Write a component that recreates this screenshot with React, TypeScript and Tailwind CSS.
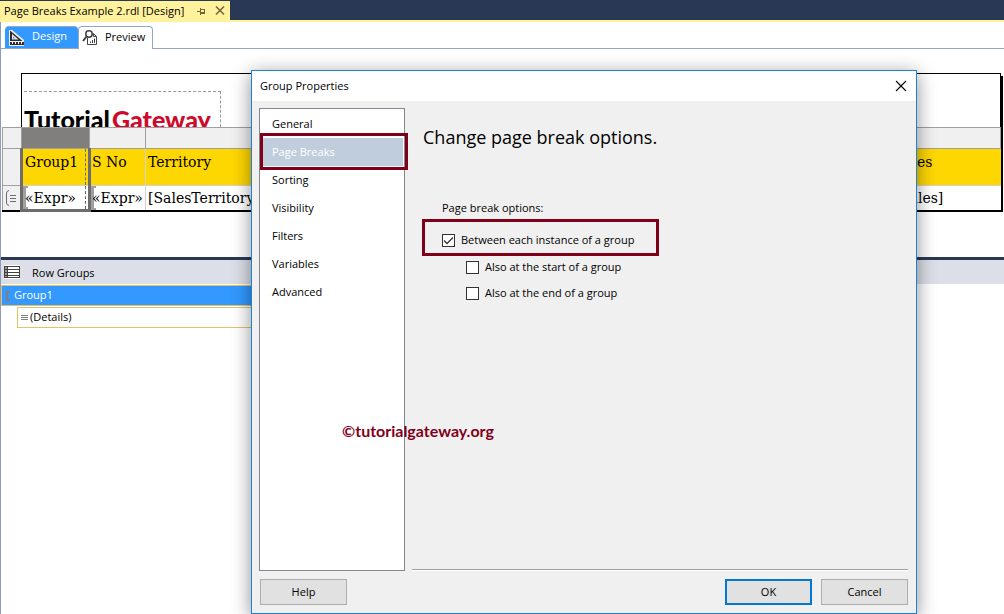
import React, { useState } from 'react';

const pages = ['General', 'Page Breaks', 'Sorting', 'Visibility', 'Filters', 'Variables', 'Advanced'];

const DesignIcon: React.FC = () => (
  <svg width="16" height="16" viewBox="0 0 16 16" aria-hidden="true">
    <path d="M1 0H3L15 10V16H0V0Z" fill="#f0eff1" />
    <path d="M1 0.500L13.500 11H1Z" fill="#2d2d30" />
    <path d="M3 4L9.500 9.500H3Z" fill="#f0eff1" />
    <path d="M4 6.500L6.500 8.500H4Z" fill="#3399ff" />
    <path d="M1 12h14v3H1z" fill="#2d2d30" />
    <path d="M3 12h1v2H3zM6 12h1v2H6zM9 12h1v2H9zM12 12h1v2h-1z" fill="#f0eff1" />
  </svg>
);

const PreviewIcon: React.FC = () => (
  <svg width="16" height="16" viewBox="0 0 16 16" fill="none" aria-hidden="true">
    <circle cx="7" cy="4" r="3.2" stroke="#424242" strokeWidth="1.5" />
    <path d="M4.500 6.500L1 11" stroke="#424242" strokeWidth="2" />
    <path d="M11.500 3.500L14.500 6.500V14.500H5.500V8" stroke="#424242" />
    <path d="M11.500 3.500V6.500H14.500" stroke="#424242" />
    <path d="M8.500 13V11.500M10.500 13V10M12.500 13V8.500" stroke="#424242" />
  </svg>
);

const DocumentTab: React.FC = () => (
  <header className="bg-[#293955] border-b-2 border-[#fff29d] pt-px">
    <div className="flex items-center w-[230px] h-[19px] pl-1 bg-[#fff29d] text-black whitespace-nowrap">
      <span className="w-[193px]">Page Breaks Example 2.rdl [Design]</span>
      <button type="button" aria-label="Pin tab" className="mr-[9px]">
        <svg width="9" height="8" viewBox="0 0 9 8" fill="none" stroke="#75633d" shapeRendering="crispEdges">
          <path d="M0 4.500H3M3.500 1V8M4 2.500H8M4 5.500H8M4 6.500H8M7.500 2V7" />
        </svg>
      </button>
      <button type="button" aria-label="Close tab">
        <svg width="10" height="9" viewBox="0 0 10 9" fill="none" stroke="#75633d" strokeWidth="1.5">
          <path d="M1 0.500L9 8.500M9 0.500L1 8.500" />
        </svg>
      </button>
    </div>
  </header>
);

const ViewTabs: React.FC = () => (
  <nav className="flex h-[27px] pt-1 pl-1 border-b border-[#98a7bd]">
    <button type="button" className="flex items-center gap-[7px] w-[73px] h-[22px] pl-1 bg-[#3399ff] border-t border-[#98a7bd] rounded-t-sm text-white">
      <DesignIcon />
      <span className="pb-[3px]">Design</span>
    </button>
    <button type="button" className="flex items-center gap-[7px] w-[75px] h-[23px] pl-[3px] bg-white border border-b-0 border-[#98a7bd] rounded-t-sm text-black">
      <PreviewIcon />
      <span className="pb-[3px]">Preview</span>
    </button>
  </nav>
);

const CellBracket: React.FC = () => (
  <span className="absolute left-0 inset-y-0 w-[5px] border-y-2 border-l-3 border-[#a0a0a0]" />
);

const ReportCanvas: React.FC = () => (
  <div className="h-[208px] pt-6 pl-px pr-[3px] overflow-hidden">
    {/* Page header */}
    <div className="ml-[19px] h-[54px] pt-[17px] border border-b-0 border-black shadow-[2px_3px_0_#000]">
      <div className="ml-0.5 w-[197px] h-9 pt-[11px] overflow-hidden border-t border-r border-dashed border-[#999999] whitespace-nowrap font-['Lato',sans-serif] text-[25px] leading-8 font-black text-black">
        Tutorial<span className="ml-0.5 text-[#ce0a2c]">Gateway</span>
      </div>
    </div>

    {/* Tablix */}
    <table className="w-full table-fixed border-collapse bg-white shadow-[2px_0_0_#000] font-['DejaVu_Serif',serif] text-[14px] leading-5 text-black">
      <colgroup>
        <col className="w-[19px]" />
        <col className="w-[68px]" />
        <col className="w-[56px]" />
        <col />
        <col className="w-[108px]" />
      </colgroup>
      <thead>
        <tr className="h-[21px] bg-[#f0f0f0]">
          <td className="border border-[#a0a0a0]" />
          <td className="border border-[#a0a0a0] bg-[#807f7d]" />
          <td className="border border-[#a0a0a0]" />
          <td className="border border-[#a0a0a0]" />
          <td className="border border-[#a0a0a0]" />
        </tr>
      </thead>
      <tbody>
        <tr className="h-[37px] bg-[#ffd700] text-left align-top">
          <td className="border border-[#a0a0a0] bg-[#f0f0f0]" />
          <th className="relative p-0 pt-[3px] pl-0.5 font-normal border-l-3 border-r-3 border-[#6d6d6d]">
            <span className="absolute inset-y-0 right-0.5 border-r border-dashed border-[#6d6d6d]" />
            Group1
          </th>
          <th className="p-0 pt-[3px] pl-px font-normal border-r border-[#d3d3d3]">S No</th>
          <th className="p-0 pt-[3px] pl-0.5 font-normal">Territory</th>
          <th className="p-0 pt-[3px] pl-0.5 font-normal">Sales</th>
        </tr>
        <tr className="h-[25px] border-b-2 border-black whitespace-nowrap">
          <td className="p-0 border border-[#a0a0a0] bg-[#f0f0f0]">
            <svg className="mx-auto" width="13" height="18" viewBox="0 0 13 18" fill="none" stroke="#6d6d6d" aria-hidden="true">
              <path d="M4 1.500Q1.500 2 1.500 4V14Q1.500 16 4 16.500M5 6.500H11M5 9.500H11M5 12.500H11" />
            </svg>
          </td>
          <td className="relative p-0 pl-0.5 border-3 border-t border-t-[#d3d3d3] border-[#6d6d6d]">
            <CellBracket />
            <span className="absolute inset-y-0 right-0.5 border-r border-dashed border-[#6d6d6d]" />
            <span className="relative">«Expr»</span>
          </td>
          <td className="relative p-0 pl-px border-r border-t border-[#d3d3d3]">
            <CellBracket />
            <span className="relative">«Expr»</span>
          </td>
          <td className="p-0 pl-0.5 border-t border-t-[#d3d3d3]">[SalesTerritory]</td>
          <td className="p-0 pl-0.5 border-t border-t-[#d3d3d3]">[Sales]</td>
        </tr>
      </tbody>
    </table>
  </div>
);

const GroupingPane: React.FC = () => (
  <section className="border-t-3 border-[#293955] text-black">
    <div className="flex items-center gap-3 h-6 pl-[3px] bg-[#dcdfe7]">
      <svg width="16" height="14" viewBox="0 0 16 14" fill="none" stroke="#424242" shapeRendering="crispEdges" aria-hidden="true">
        <path d="M0 0h16v14H0z" fill="#fff" stroke="none" />
        <path d="M0 1h3v12H0z" fill="#999" stroke="none" />
        <path d="M0 1.500H15.500V12.500H0.500V1.500M3.500 1V13M0 4.500H16M0 7.500H16M0 10.500H16" />
      </svg>
      <h2 className="pt-px">Row Groups</h2>
    </div>
    <ul className="w-1/2 pt-px">
      <li className="flex items-center gap-1 h-[21px] pl-1 bg-[#3399ff] border border-[#e5c365] text-white">
        <svg width="4" height="10" viewBox="0 0 4 10" fill="none" stroke="#808080" strokeWidth="2" aria-hidden="true">
          <path d="M4 1H1V9H4" />
        </svg>
        <span className="pb-0.5">Group1</span>
      </li>
      <li className="flex items-center gap-0.5 h-[21px] mt-px ml-4 pl-[3px] border border-[#e5c365]">
        <svg width="7" height="7" viewBox="0 0 7 7" stroke="#808080" shapeRendering="crispEdges" aria-hidden="true">
          <path d="M0 1.500H7M0 3.500H7M0 5.500H7" />
        </svg>
        <span className="pb-0.5">(Details)</span>
      </li>
    </ul>
  </section>
);

type CheckOptionProps = { label: string; defaultChecked?: boolean };

const CheckOption: React.FC<CheckOptionProps> = ({ label, defaultChecked }) => (
  <label className="flex items-center gap-1.5 h-[26px]">
    <span className="grid">
      <input
        type="checkbox"
        defaultChecked={defaultChecked}
        className="peer col-start-1 row-start-1 appearance-none size-[13px] bg-white border border-[#333333]"
      />
      <svg className="col-start-1 row-start-1 invisible peer-checked:visible pointer-events-none" width="13" height="13" viewBox="0 0 13 13" fill="none" stroke="#333333" strokeWidth="1.3">
        <path d="M2 6.500L5 9.500L11 3.500" />
      </svg>
    </span>
    {label}
  </label>
);

const GroupPropertiesDialog: React.FC = () => {
  const [active, setActive] = useState('Page Breaks');

  return (
    <div
      role="dialog"
      aria-labelledby="dialog-title"
      className="absolute left-[251px] right-[87px] top-[70px] bottom-0 flex flex-col bg-[#f0f0f0] border border-[#1883d7] shadow-[0_4px_18px_rgba(0,0,0,0.45)] text-black"
    >
      <div className="flex items-center justify-between h-[30px] shrink-0 pl-2 pr-[9px] bg-white">
        <h1 id="dialog-title">Group Properties</h1>
        <button type="button" aria-label="Close">
          <svg width="12" height="12" viewBox="0 0 12 12" stroke="#000" strokeWidth="1.1">
            <path d="M1 1L11 11M11 1L1 11" />
          </svg>
        </button>
      </div>

      <div className="flex flex-1 gap-[7px] min-h-0 pt-[7px] pl-[7px] pr-2">
        <ul className="w-[146px] shrink-0 pt-px bg-white border border-[#828790]">
          {pages.map((page) => (
            <li key={page} className="px-px">
              <button
                type="button"
                onClick={() => setActive(page)}
                className={`w-full h-7 pl-[11px] text-left ${page === active ? 'bg-[#bfcddd] text-white' : ''}`}
              >
                {page}
              </button>
            </li>
          ))}
        </ul>

        <div className="flex-1 mb-px border-b border-[#a0a0a0] shadow-[0_1px_0_#fff]">
          <h2 className="pt-[15px] pl-[11px] text-[18px] leading-7">Change page break options.</h2>
          <fieldset className="pt-[47px] pl-[30px]">
            <legend className="contents">
              <span className="block h-5 leading-5">Page break options:</span>
            </legend>
            <div className="pt-[9px]">
              <CheckOption label="Between each instance of a group" defaultChecked />
            </div>
            <div className="pl-6 pt-px">
              <CheckOption label="Also at the start of a group" />
              <CheckOption label="Also at the end of a group" />
            </div>
          </fieldset>
        </div>
      </div>

      <div className="flex shrink-0 gap-[9px] p-2">
        <button type="button" className="w-[87px] h-[26px] mr-auto bg-[#e1e1e1] border border-[#adadad]">Help</button>
        <button type="button" className="w-[87px] h-[26px] bg-[#e1e1e1] border-2 border-[#0078d7]">OK</button>
        <button type="button" className="w-[87px] h-[26px] bg-[#e1e1e1] border border-[#adadad]">Cancel</button>
      </div>

      {/* Callouts */}
      <div className="absolute left-2 top-[62px] w-[148px] h-[37px] border-3 border-[#80001a] pointer-events-none" />
      <div className="absolute left-[170px] top-[148px] w-[237px] h-[37px] border-3 border-[#80001a] pointer-events-none" />
      <p className="absolute left-[90px] top-[350px] font-['Lato',sans-serif] text-[16px] leading-5 font-bold text-[#80001a]">©tutorialgateway.org</p>
    </div>
  );
};

const App: React.FC = () => (
  <div className="relative flex flex-col min-h-screen overflow-hidden bg-white font-['Open_Sans','Noto_Sans',sans-serif] text-[11px] leading-4">
    <DocumentTab />
    <main className="flex-1 border-l border-[#8e9bbc]">
      <ViewTabs />
      <ReportCanvas />
      <GroupingPane />
    </main>
    <GroupPropertiesDialog />
  </div>
);

export default App;
